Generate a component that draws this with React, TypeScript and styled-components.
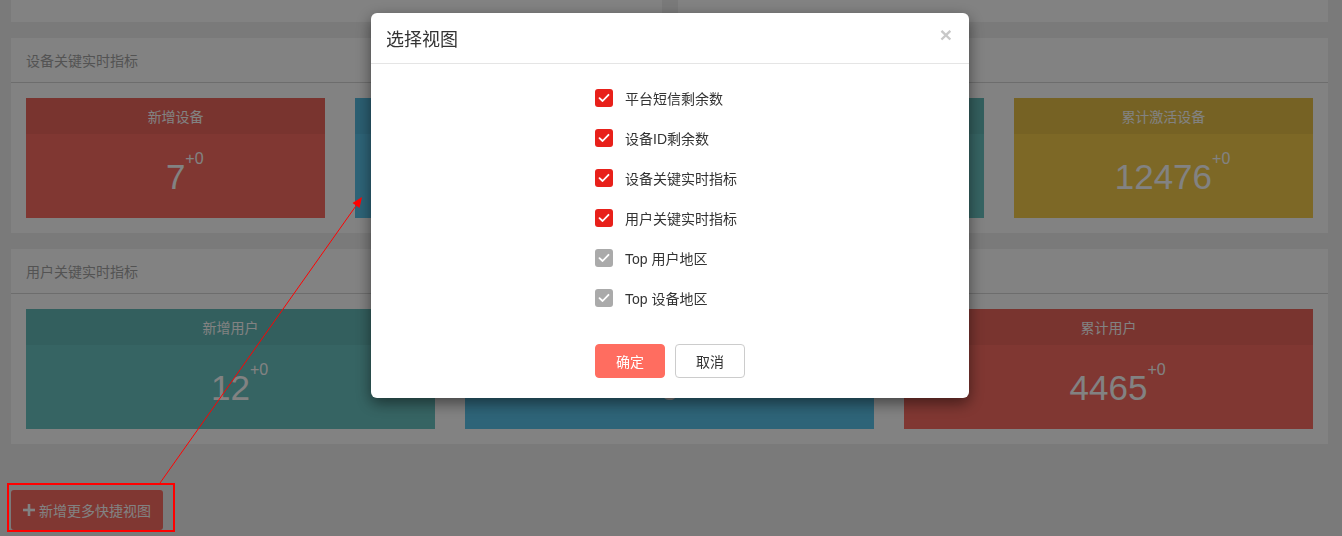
import React from "react";
import styled, { createGlobalStyle } from "styled-components";

const GlobalStyle = createGlobalStyle`
  html, body { margin: 0; padding: 0; }
  body {
    background: #f0f0f0;
    font-family: "Liberation Sans", "Noto Sans CJK SC", sans-serif;
    overflow: hidden;
  }
  * { box-sizing: border-box; }
`;

const Page = styled.div`
  height: 536px;
  padding: 0 14px 0 11px;
  display: flex;
  flex-direction: column;
  gap: 16px;
  overflow: hidden;
`;

const TopRow = styled.div`
  display: grid;
  grid-template-columns: 1fr 1fr;
  gap: 16px;
  height: 22px;
`;

const Panel = styled.section`
  background: #fff;
`;

const PanelHeader = styled.div`
  height: 45px;
  padding: 0 15px;
  border-bottom: 1px solid #d6d6d6;
  display: flex;
  align-items: center;
  font-size: 14px;
  color: #a4a4a4;
`;

const PanelBody = styled.div<{ $cols: number }>`
  padding: 15px;
  display: grid;
  grid-template-columns: repeat(${(p) => p.$cols}, 1fr);
  gap: 30px;
`;

const Card = styled.div<{ $bg: string }>`
  height: 120px;
  background: ${(p) => p.$bg};
  display: flex;
  flex-direction: column;
  color: #fff;
`;

const CardHead = styled.div`
  height: 36px;
  background: rgba(0, 0, 0, 0.05);
  display: flex;
  align-items: center;
  justify-content: center;
  font-size: 14px;
`;

const CardBody = styled.div`
  flex: 1;
  display: flex;
  align-items: center;
  justify-content: center;
`;

const Num = styled.span`
  position: relative;
  font-family: "Liberation Sans", Arial, sans-serif;
  font-size: 35px;
  line-height: 1;
`;

const Sup = styled.span`
  position: absolute;
  left: 100%;
  top: -8px;
  font-size: 16px;
  line-height: 1;
`;

const Footer = styled.div`
  margin-top: 30px;
`;

const AddButton = styled.button`
  height: 40px;
  padding: 0 12px 0 12px;
  border: none;
  border-radius: 3px;
  background: #fb6c62;
  color: #fff;
  font-family: "Liberation Sans", "Noto Sans CJK SC", sans-serif;
  font-size: 14px;
  display: flex;
  align-items: center;
  gap: 4px;
`;

const Mask = styled.div`
  position: fixed;
  inset: 0;
  background: rgba(0, 0, 0, 0.49);
`;

const Modal = styled.div`
  position: fixed;
  left: 371px;
  top: 13px;
  width: 598px;
  background: #fff;
  border-radius: 6px;
  box-shadow: 0 5px 15px rgba(0, 0, 0, 0.5);
  font-family: "Liberation Sans", "Noto Sans CJK SC", sans-serif;
`;

const ModalHeader = styled.div`
  height: 51px;
  padding: 0 17px 0 15px;
  border-bottom: 1px solid #e5e5e5;
  display: flex;
  align-items: center;
  justify-content: space-between;
`;

const ModalTitle = styled.h4`
  margin: 0;
  font-size: 18px;
  font-weight: normal;
  color: #333;
`;

const Close = styled.span`
  font-size: 21px;
  font-weight: bold;
  color: #c8c8c8;
  line-height: 1;
  margin-top: -7px;
`;

const ModalBody = styled.div`
  width: 150px;
  margin: 0 auto;
  padding: 14px 0 20px;
`;

const Option = styled.label`
  height: 40px;
  display: flex;
  align-items: center;
  gap: 12px;
  font-size: 14px;
  color: #333;
  white-space: nowrap;
`;

const Box = styled.span<{ $disabled?: boolean }>`
  width: 18px;
  height: 18px;
  border-radius: 3px;
  background: ${(p) => (p.$disabled ? "#aaaaaa" : "#e8201a")};
  display: flex;
  align-items: center;
  justify-content: center;
`;

const Actions = styled.div`
  margin-top: 26px;
  display: flex;
  gap: 10px;
`;

const Btn = styled.button<{ $primary?: boolean }>`
  width: 70px;
  height: 34px;
  border-radius: 4px;
  font-family: "Liberation Sans", "Noto Sans CJK SC", sans-serif;
  font-size: 14px;
  border: 1px solid ${(p) => (p.$primary ? "#ff6d60" : "#cccccc")};
  background: ${(p) => (p.$primary ? "#ff6d60" : "#fff")};
  color: ${(p) => (p.$primary ? "#fff" : "#333")};
`;

const Highlight = styled.div`
  position: fixed;
  left: 7px;
  top: 483px;
  width: 168px;
  height: 49px;
  border: 2px solid #ff0000;
`;

const ArrowLayer = styled.svg`
  position: fixed;
  left: 0;
  top: 0;
  pointer-events: none;
`;

type Metric = { title: string; value: number; color: string };

const RED = "#fb6c62";
const TEAL = "#6ac4c2";
const BLUE = "#5ac4eb";
const YELLOW = "#f5cc4b";

const deviceMetrics: Metric[] = [
  { title: "新增设备", value: 7, color: RED },
  { title: "活跃设备", value: 0, color: BLUE },
  { title: "启动次数", value: 0, color: TEAL },
  { title: "累计激活设备", value: 12476, color: YELLOW },
];

const userMetrics: Metric[] = [
  { title: "新增用户", value: 12, color: TEAL },
  { title: "活跃用户", value: 0, color: BLUE },
  { title: "累计用户", value: 4465, color: RED },
];

const options = [
  { label: "平台短信剩余数", disabled: false },
  { label: "设备ID剩余数", disabled: false },
  { label: "设备关键实时指标", disabled: false },
  { label: "用户关键实时指标", disabled: false },
  { label: "Top 用户地区", disabled: true },
  { label: "Top 设备地区", disabled: true },
];

const Check = () => (
  <svg width="12" height="10" viewBox="0 0 12 10">
    <path d="M1.5 5.2 L4.6 8 L10.5 1.8" fill="none" stroke="#fff" strokeWidth="1.8" strokeLinecap="round" strokeLinejoin="round" />
  </svg>
);

const PlusIcon = () => (
  <svg width="12" height="12" viewBox="0 0 12 12">
    <rect x="4.7" y="0" width="2.6" height="12" fill="#fff" />
    <rect x="0" y="4.7" width="12" height="2.6" fill="#fff" />
  </svg>
);

const MetricPanel = ({ title, items }: { title: string; items: Metric[] }) => (
  <Panel>
    <PanelHeader>{title}</PanelHeader>
    <PanelBody $cols={items.length}>
      {items.map((m) => (
        <Card key={m.title} $bg={m.color}>
          <CardHead>{m.title}</CardHead>
          <CardBody>
            <Num>
              {m.value}
              <Sup>+0</Sup>
            </Num>
          </CardBody>
        </Card>
      ))}
    </PanelBody>
  </Panel>
);

export default function App() {
  return (
    <>
      <GlobalStyle />
      <Page>
        <TopRow>
          <Panel />
          <Panel />
        </TopRow>
        <MetricPanel title="设备关键实时指标" items={deviceMetrics} />
        <MetricPanel title="用户关键实时指标" items={userMetrics} />
        <Footer>
          <AddButton>
            <PlusIcon />
            新增更多快捷视图
          </AddButton>
        </Footer>
      </Page>
      <Mask />
      <Modal>
        <ModalHeader>
          <ModalTitle>选择视图</ModalTitle>
          <Close>×</Close>
        </ModalHeader>
        <ModalBody>
          {options.map((o) => (
            <Option key={o.label}>
              <Box $disabled={o.disabled}>
                <Check />
              </Box>
              {o.label}
            </Option>
          ))}
          <Actions>
            <Btn $primary>确定</Btn>
            <Btn>取消</Btn>
          </Actions>
        </ModalBody>
      </Modal>
      <Highlight />
      <ArrowLayer width="1342" height="536" viewBox="0 0 1342 536">
        <line x1="160" y1="483" x2="358" y2="203" stroke="#ff0000" strokeWidth="1" />
        <polygon points="362,197 359.5,208 352.5,203" fill="#ff0000" />
      </ArrowLayer>
    </>
  );
}
